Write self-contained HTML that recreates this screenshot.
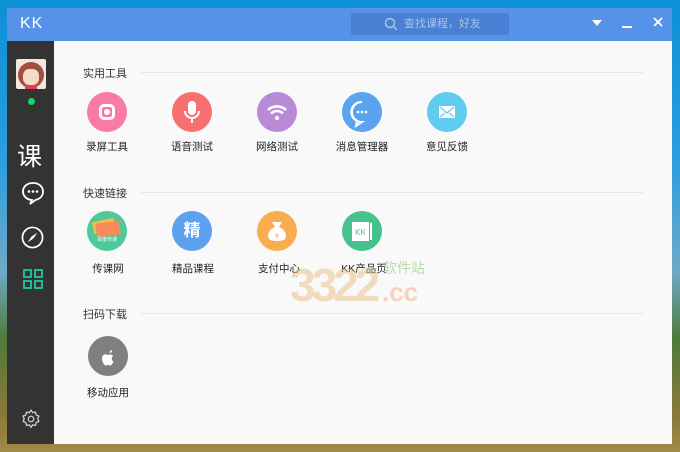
<!DOCTYPE html>
<html><head><meta charset="utf-8"><style>
*{margin:0;padding:0;box-sizing:border-box}
body{width:680px;height:452px;overflow:hidden;position:relative;font-family:"Liberation Sans","Noto Sans CJK SC",sans-serif;
background:linear-gradient(180deg,#0d8fd6 0%,#2a9ee0 35%,#6fa9c8 60%,#4f7a3a 75%,#8a7a3a 92%,#a08a48 100%)}
.win{position:absolute;left:7px;top:8px;width:665px;height:436px;background:#f9f9f9}
.title{position:absolute;left:0;top:0;width:665px;height:33px;background:#5592e8}
.kk{position:absolute;left:13px;top:7px;color:#fff;font-size:16px;letter-spacing:1px}
.search{position:absolute;left:344px;top:5px;width:158px;height:22px;background:#4a80d4;border-radius:2px;color:#a9c2ea;font-size:11px;line-height:22px;padding-left:53px}
.side{position:absolute;left:0;top:33px;width:47px;height:403px;background:#333}
.sec{position:absolute;left:83px;font-size:11px;color:#333}
.line{position:absolute;left:141px;width:502px;height:1px;background:#e6e6e6}
.ic{position:absolute;width:40px;height:40px;border-radius:50%}
.lb{position:absolute;font-size:10.5px;color:#222;width:80px;text-align:center}
</style></head><body>
<div class="win">
<div class="title"><div class="kk">KK</div>
<div class="search">查找课程，好友
<svg style="position:absolute;left:33px;top:4px" width="14" height="14" viewBox="0 0 14 14"><circle cx="6" cy="6" r="4.5" stroke="#a9c2ea" stroke-width="1.5" fill="none"/><line x1="9.5" y1="9.5" x2="13" y2="13" stroke="#a9c2ea" stroke-width="1.5"/></svg></div>
<svg style="position:absolute;left:585px;top:12px" width="10" height="7"><polygon points="0,0 10,0 5,6" fill="#fff"/></svg>
<div style="position:absolute;left:615px;top:18px;width:10px;height:2px;background:#fff"></div>
<svg style="position:absolute;left:646px;top:9px" width="10" height="10"><path d="M1 1L9 9M9 1L1 9" stroke="#fff" stroke-width="1.8"/></svg>
</div>
<div class="side">
<div style="position:absolute;left:9px;top:18px;width:30px;height:30px;background:#f2e7e0;border-radius:2px;overflow:hidden"><div style="position:absolute;left:2px;top:3px;width:26px;height:26px;border-radius:50%;background:#a0503c"></div><div style="position:absolute;left:7px;top:10px;width:16px;height:16px;border-radius:40%;background:#f6dcc8"></div><div style="position:absolute;left:9px;top:26px;width:12px;height:4px;background:#e04050"></div></div>
<div style="position:absolute;left:21px;top:57px;width:7px;height:7px;border-radius:50%;background:#1fd16a"></div>
<div style="position:absolute;left:10px;top:99px;color:#fff;font-size:25px;line-height:30px;font-family:'Noto Sans CJK SC',sans-serif">课</div>
<svg style="position:absolute;left:14px;top:140px" width="24" height="24" viewBox="0 0 24 24"><path d="M12 2C6 2 2 5.6 2 10.5c0 4.7 4 8.3 9 8.5l-2 4 6-4.3c4.6-1 7-4.3 7-8.2C22 5.6 18 2 12 2z" fill="none" stroke="#fff" stroke-width="1.8"/><circle cx="8" cy="10.5" r="1.3" fill="#fff"/><circle cx="12" cy="10.5" r="1.3" fill="#fff"/><circle cx="16" cy="10.5" r="1.3" fill="#fff"/></svg>
<svg style="position:absolute;left:14px;top:185px" width="23" height="23" viewBox="0 0 24 24"><circle cx="12" cy="12" r="10.5" fill="none" stroke="#fff" stroke-width="1.8"/><path d="M17 7L13 13 11 11z" fill="#fff"/><path d="M7 17L11 11 13 13z" fill="#fff"/></svg>
<svg style="position:absolute;left:16px;top:228px" width="20" height="20" viewBox="0 0 20 20" fill="none" stroke="#1fc7a0" stroke-width="1.8"><rect x="1" y="1" width="7" height="7"/><rect x="12" y="1" width="7" height="7"/><rect x="1" y="12" width="7" height="7"/><rect x="12" y="12" width="7" height="7"/></svg>
<svg style="position:absolute;left:14px;top:368px" width="20" height="20" viewBox="0 0 24 24"><path d="M12 1.5l2 2.8 3.4-.6.8 3.4 3.2 1.4-1.2 3.2 1.2 3.2-3.2 1.4-.8 3.4-3.4-.6-2 2.8-2-2.8-3.4.6-.8-3.4-3.2-1.4 1.2-3.2-1.2-3.2 3.2-1.4.8-3.4 3.4.6z" fill="none" stroke="#ccc" stroke-width="1.6"/><circle cx="12" cy="12" r="3.3" fill="none" stroke="#ccc" stroke-width="1.6"/></svg>
</div>
</div>
<div class="sec" style="top:65px">实用工具</div><div class="line" style="top:72px"></div>
<div class="sec" style="top:185px">快速链接</div><div class="line" style="top:192px"></div>
<div class="sec" style="top:306px">扫码下载</div><div class="line" style="top:313px"></div>

<div class="ic" style="left:87px;top:92px;background:#f97aa5"><div style="position:absolute;left:12px;top:12px;width:16px;height:16px;border:3px solid #fff;border-radius:5px"></div><div style="position:absolute;left:17px;top:17px;width:6px;height:6px;background:#fff;border-radius:50%"></div></div>
<div class="ic" style="left:172px;top:92px;background:#f77070"><svg width="40" height="40"><rect x="16" y="9" width="8" height="14" rx="4" fill="#fff"/><path d="M13 19a7 7 0 0 0 14 0M20 26v5" stroke="#fff" stroke-width="2" fill="none"/></svg></div>
<div class="ic" style="left:257px;top:92px;background:#b98ad8"><svg width="40" height="40"><path d="M11 18a13 13 0 0 1 18 0M14 21.5a8.5 8.5 0 0 1 12 0" stroke="#fff" stroke-width="2.5" fill="none"/><circle cx="20" cy="26" r="2" fill="#fff"/></svg></div>
<div class="ic" style="left:342px;top:92px;background:#5ba3ef"><svg width="40" height="40"><path d="M20 10a10 10 0 1 0 0 20h0l-6 4 1-5A10 10 0 0 1 20 10z" fill="none" stroke="#fff" stroke-width="2"/><circle cx="16" cy="20" r="1.3" fill="#fff"/><circle cx="20" cy="20" r="1.3" fill="#fff"/><circle cx="24" cy="20" r="1.3" fill="#fff"/></svg></div>
<div class="ic" style="left:427px;top:92px;background:#5fcbee"><svg width="40" height="40"><rect x="12" y="14" width="16" height="12" fill="#fff"/><path d="M13 15l7 6 7-6M13 25l5-4M27 25l-5-4" stroke="#5fcbee" stroke-width="1.2" fill="none"/></svg></div>
<div class="lb" style="left:67px;top:139px">录屏工具</div>
<div class="lb" style="left:152px;top:139px">语音测试</div>
<div class="lb" style="left:237px;top:139px">网络测试</div>
<div class="lb" style="left:322px;top:139px">消息管理器</div>
<div class="lb" style="left:407px;top:139px">意见反馈</div>

<div class="ic" style="left:87px;top:211px;background:#4ec99a;overflow:hidden"><div style="position:absolute;left:6px;top:9px;width:22px;height:12px;background:#f8c042;transform:rotate(-12deg)"></div><div style="position:absolute;left:9px;top:11px;width:24px;height:14px;background:#f98a5a;transform:rotate(-8deg)"></div><div style="position:absolute;left:6px;top:25px;width:28px;font-size:5px;color:#fff;text-align:center">百度传课</div></div>
<div class="ic" style="left:172px;top:211px;background:#5ea2ef;color:#fff;font-size:17px;font-weight:bold;text-align:center;line-height:40px">精</div>
<div class="ic" style="left:257px;top:211px;background:#f8ad50"><svg width="40" height="40"><path d="M15 11h10l-3 5c5 2 7 6 7 9 0 4-4 5-9 5s-9-1-9-5c0-3 2-7 7-9z" fill="#fff"/><text x="20" y="27" font-size="7" fill="#f8ad50" text-anchor="middle">¥</text></svg></div>
<div class="ic" style="left:342px;top:211px;background:#46c28c"><svg width="40" height="40"><rect x="10" y="11" width="17" height="19" fill="#fff"/><rect x="28" y="12" width="2" height="17" fill="#fff"/><text x="18.5" y="24" font-size="8" fill="#46c28c" text-anchor="middle">KK</text></svg></div>
<div class="lb" style="left:68px;top:261px">传课网</div>
<div class="lb" style="left:153px;top:261px">精品课程</div>
<div class="lb" style="left:239px;top:261px">支付中心</div>
<div class="lb" style="left:324px;top:261px">KK产品页</div>

<div class="ic" style="left:88px;top:336px;background:#808080"><svg width="40" height="40"><path d="M24 14c-1 0-2.5 1.5-2.2 3 1 .2 2.6-1.2 2.2-3zM20 19c-2-1.2-6-1-6 3.5 0 3 2 7 4 7 1 0 1.5-.6 2-.6s1 .6 2 .6c1.5 0 3-2.6 3.5-4-2-1-2.5-4-.3-5.5-1.5-2-4-1.7-5.2-1z" fill="#fff"/></svg></div>
<div class="lb" style="left:68px;top:385px">移动应用</div>

<div style="position:absolute;left:290px;top:258px;font-size:46px;font-weight:bold;color:#e8c080;opacity:.5;letter-spacing:-4px">3322</div>
<div style="position:absolute;left:382px;top:277px;font-size:26px;font-weight:bold;color:#f7b890;opacity:.6">.cc</div>
<div style="position:absolute;left:383px;top:258px;font-size:14px;color:#9ad08a;opacity:.7">软件站</div>
</body></html>
